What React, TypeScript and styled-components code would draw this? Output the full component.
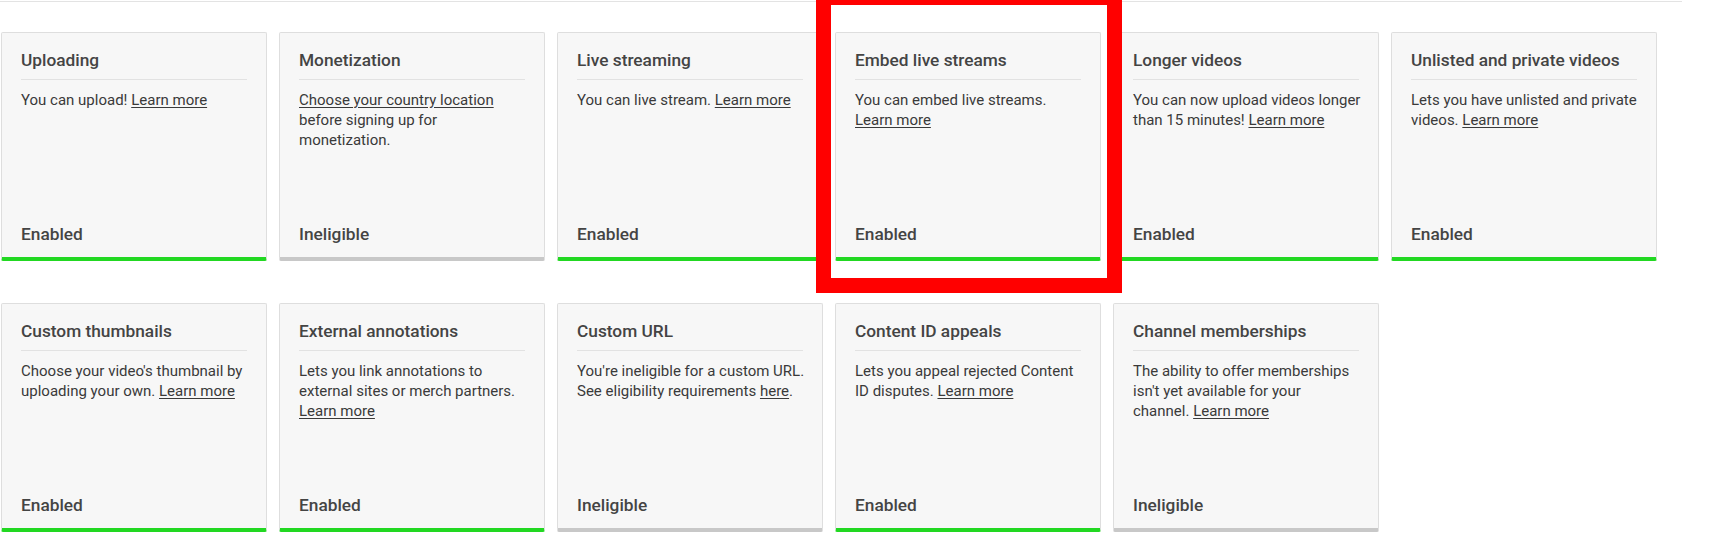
import React from "react";
import styled, { createGlobalStyle } from "styled-components";

const GlobalStyle = createGlobalStyle`
  html, body { margin: 0; padding: 0; background: #ffffff; }
  body { font-family: Roboto, "Noto Sans", "Liberation Sans", sans-serif; }
  * { box-sizing: border-box; }
`;

const Page = styled.div`
  width: 1712px;
  height: 556px;
  overflow: hidden;
  position: relative;
`;

const TopRule = styled.div`
  margin-top: 1px;
  width: 1682px;
  height: 1px;
  background: #e3e3e3;
`;

const Grid = styled.div`
  display: grid;
  grid-template-columns: repeat(6, 266px);
  column-gap: 12px;
  row-gap: 42px;
  padding: 30px 0 0 1px;
`;

const Card = styled.div<{ $status: "enabled" | "ineligible" }>`
  position: relative;
  height: 229px;
  display: flex;
  flex-direction: column;
  padding: 0 19px;
  background: #f7f7f7;
  border: 1px solid #dedede;
  border-bottom: 4px solid ${(p) => (p.$status === "enabled" ? "#22d822" : "#c8c8c8")};
  border-radius: 2px;
`;

const Title = styled.div`
  padding-top: 15px;
  padding-bottom: 7px;
  border-bottom: 1px solid #e2e2e2;
  font-size: 17.3px;
  line-height: 24px;
  font-weight: 500;
  color: #444444;
  white-space: nowrap;
`;

const Body = styled.div`
  margin-top: 10px;
  margin-right: -12px;
  font-size: 15px;
  line-height: 20px;
  color: #3a3a3a;
`;

const Link = styled.a`
  color: #3a3a3a;
  text-decoration: underline;
  text-underline-offset: 2px;
  cursor: pointer;
`;

const Status = styled.div`
  margin-top: auto;
  padding-bottom: 11px;
  font-size: 17.3px;
  line-height: 24px;
  font-weight: 500;
  color: #444444;
`;

const Highlight = styled.div`
  position: absolute;
  top: -43px;
  left: -20px;
  right: -22px;
  bottom: -36px;
  border: 15px solid #ff0000;
  z-index: 2;
  pointer-events: none;
`;

type Feature = {
  title: string;
  body: React.ReactNode;
  status: "enabled" | "ineligible";
  highlight?: boolean;
};

const LM = <Link>Learn more</Link>;

const features: Feature[] = [
  { title: "Uploading", body: <>You can upload! {LM}</>, status: "enabled" },
  {
    title: "Monetization",
    body: <><Link>Choose your country location</Link><br />before signing up for<br />monetization.</>,
    status: "ineligible",
  },
  { title: "Live streaming", body: <>You can live stream. {LM}</>, status: "enabled" },
  {
    title: "Embed live streams",
    body: <>You can embed live streams.<br />{LM}</>,
    status: "enabled",
    highlight: true,
  },
  {
    title: "Longer videos",
    body: <>You can now upload videos longer<br />than 15 minutes! {LM}</>,
    status: "enabled",
  },
  {
    title: "Unlisted and private videos",
    body: <>Lets you have unlisted and private<br />videos. {LM}</>,
    status: "enabled",
  },
  {
    title: "Custom thumbnails",
    body: <>Choose your video's thumbnail by<br />uploading your own. {LM}</>,
    status: "enabled",
  },
  {
    title: "External annotations",
    body: <>Lets you link annotations to<br />external sites or merch partners.<br />{LM}</>,
    status: "enabled",
  },
  {
    title: "Custom URL",
    body: <>You're ineligible for a custom URL.<br />See eligibility requirements <Link>here</Link>.</>,
    status: "ineligible",
  },
  {
    title: "Content ID appeals",
    body: <>Lets you appeal rejected Content<br />ID disputes. {LM}</>,
    status: "enabled",
  },
  {
    title: "Channel memberships",
    body: <>The ability to offer memberships<br />isn't yet available for your<br />channel. {LM}</>,
    status: "ineligible",
  },
];

export default function App() {
  return (
    <Page>
      <GlobalStyle />
      <TopRule />
      <Grid>
        {features.map((f) => (
          <Card key={f.title} $status={f.status}>
            <Title>{f.title}</Title>
            <Body>{f.body}</Body>
            <Status>{f.status === "enabled" ? "Enabled" : "Ineligible"}</Status>
            {f.highlight && <Highlight />}
          </Card>
        ))}
      </Grid>
    </Page>
  );
}
